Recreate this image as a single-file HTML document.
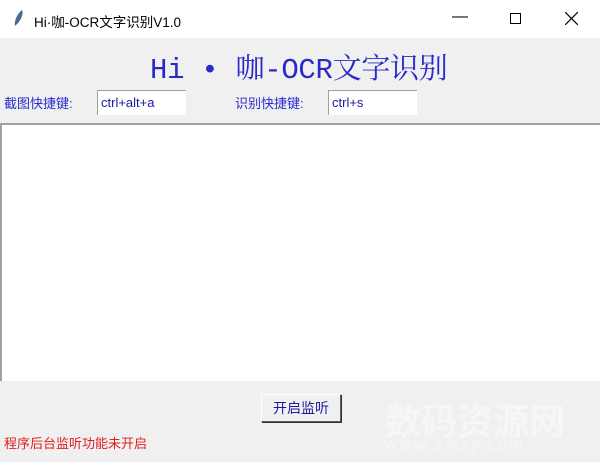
<!DOCTYPE html>
<html><head><meta charset="utf-8"><style>
*{margin:0;padding:0;box-sizing:border-box}
body{width:600px;height:462px;background:#f0f0f0;position:relative;overflow:hidden;font-family:"Liberation Sans","Noto Sans CJK SC",sans-serif}
.tb{position:absolute;left:0;top:0;width:600px;height:38px;background:#fff}
.t{position:absolute;font-size:13px;color:#000}
.blue{color:#2a2ad0}
.in{position:absolute;background:#fff;border-top:1px solid #a0a0a0;border-left:1px solid #a0a0a0;font-size:13px;color:#1a1aa0;padding:4px 0 0 3px;height:25px}
</style></head><body>
<div class="tb"></div>
<svg style="position:absolute;left:13px;top:9px" width="12" height="18"><path d="M9 1 C11 4 8 12 3 16 L2 17 C1 12 4 5 9 1Z" fill="#4a6a90"/></svg>
<div class="t" style="left:34px;top:11px;font-size:13.5px">Hi·咖-OCR文字识别V1.0</div>
<div class="t" style="left:452px;top:8px;font-size:16px">—</div>
<div style="position:absolute;left:510px;top:13px;width:11px;height:11px;border:1px solid #000"></div>
<svg style="position:absolute;left:565px;top:12px" width="13" height="13"><path d="M0 0L13 13M13 0L0 13" stroke="#000" stroke-width="1.2"/></svg>
<div class="t blue" style="left:150px;top:46px;font-size:29px;font-family:'Liberation Mono','Noto Serif CJK SC',monospace;color:#2a2ac8;letter-spacing:-0.3px">Hi • 咖-OCR文字识别</div>
<div class="t blue" style="left:4px;top:93px">截图快捷键:</div>
<div class="in" style="left:97px;top:90px;width:89px">ctrl+alt+a</div>
<div class="t blue" style="left:235px;top:93px">识别快捷键:</div>
<div class="in" style="left:328px;top:90px;width:89px">ctrl+s</div>
<div style="position:absolute;left:0;top:123px;width:600px;height:258px;background:#fff;border-top:2px solid #a0a0a0;border-left:2px solid #a0a0a0"></div>
<div style="position:absolute;left:261px;top:394px;width:80px;height:28px;background:#f0f0f0;border:1px solid;border-color:#fff #606060 #606060 #fff;box-shadow:1px 1px 0 #303030;font-size:14px;color:#1a1aa0;text-align:center;line-height:26px">开启监听</div>
<div class="t" style="left:4px;top:433px;color:#e02020">程序后台监听功能未开启</div>
<div class="t" style="left:385px;top:393px;font-size:36px;color:#f6f6f6;font-weight:bold">数码资源网</div>
<div class="t" style="left:385px;top:435px;font-size:17px;color:#f6f6f6;letter-spacing:2px">www.smzy.com</div>
</body></html>
